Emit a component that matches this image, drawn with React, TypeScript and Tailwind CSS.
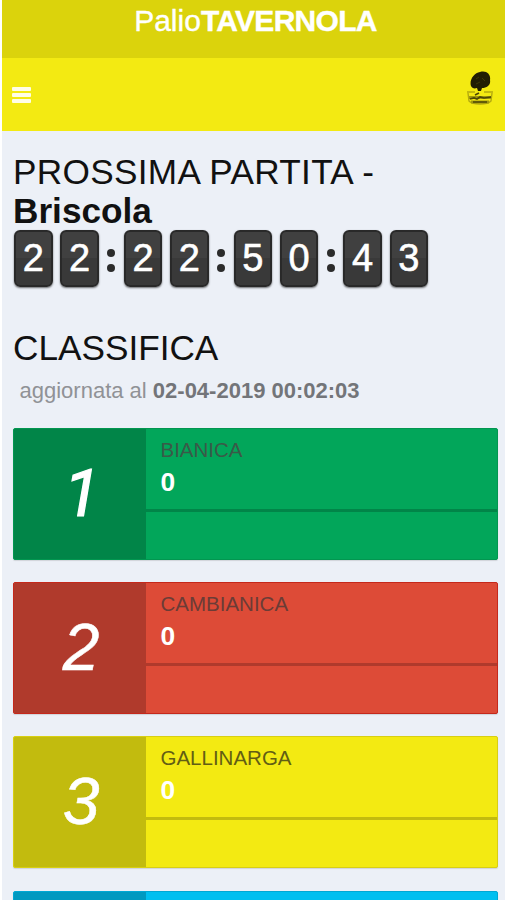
const teams = [
  { pos: 1, name: "BIANICA", points: 0, main: "bg-[#02a65a]", side: "bg-[#018548]", edge: "border-[#029650]", label: "text-[#3a5a48]" },
  { pos: 2, name: "CAMBIANICA", points: 0, main: "bg-[#dd4b37]", side: "bg-[#b03a2c]", edge: "border-[#c5281b]", label: "text-[#6b3c36]" },
  { pos: 3, name: "GALLINARGA", points: 0, main: "bg-[#f3ea12]", side: "bg-[#c2bb0e]", edge: "border-[#d8cf12]", label: "text-[#625e14]" },
  { pos: 4, name: "", points: null, main: "bg-[#00bff0]", side: "bg-[#0099c0]", edge: "border-[#00a8d4]", label: "text-[#234d5a]" },
];

function Digit({ value }: { value: string }) {
  return (
    <div className="flex h-[57px] w-[38.5px] items-center justify-center rounded-[6px] border-2 border-[#292929] bg-linear-to-b from-[#404040] from-50% to-[#393939] to-50% pb-[2px] text-[38px] leading-none text-white shadow-[0_1px_2px_rgba(0,0,0,0.55)] [-webkit-text-stroke:0.6px_white]">
      {value}
    </div>
  );
}

function Pair({ value }: { value: string }) {
  return (
    <div className="flex gap-[7.8px]">
      <Digit value={value[0]} />
      <Digit value={value[1]} />
    </div>
  );
}

function Colon() {
  return (
    <div className="flex w-[25px] flex-col items-center gap-[7px] pt-[19px]">
      <span className="size-[8px] rounded-full bg-[#2c2c2c]" />
      <span className="size-[8px] rounded-full bg-[#2c2c2c]" />
    </div>
  );
}

function Emblem() {
  return (
    <svg viewBox="0 0 30 36" className="h-[36px] w-[30px]">
      <path d="M6 15C4 9 9 2 15 1c7-2 11 3 10 8 1 5-3 8-8 8l-1 3h-3l-1-3c-3 1-5 0-6-2z" fill="#211e03" />
      <path d="M11 8l3-2m3 1 3 3m-9 3 4-2" stroke="#3d3906" strokeWidth="1" />
      <path d="M2 21h8m9 0h9M3 22l1 8c4 4 18 4 22 0l1-8" fill="none" stroke="#b5ab0e" strokeWidth="1.4" />
      <path d="M4 26.500h22M6 31h18" fill="none" stroke="#a1980d" strokeWidth="3" />
      <path d="M5 28l4-1 3 1 3-2 4 1 7-1M8 31h14M10 24l4-2" fill="none" stroke="#4c4707" strokeWidth="1.700" />
    </svg>
  );
}

function TeamBox({ team }: { team: (typeof teams)[number] }) {
  return (
    <div className={`flex h-[132px] shrink-0 overflow-hidden rounded-[2px] border shadow-[0_1px_1px_rgba(0,0,0,0.12)] ${team.main} ${team.edge}`}>
      <div className={`flex w-[132px] items-center justify-center pb-[3px] pl-[2px] text-[66px] leading-none text-white italic ${team.side}`}>
        {team.points !== null && (
          <span className={team.pos === 1 ? "pt-[2px] pl-[2px] font-[Roboto,sans-serif] [-webkit-text-stroke:1.2px_white]" : "[-webkit-text-stroke:0.5px_white]"}>
            {team.pos}
          </span>
        )}
      </div>
      <div className="flex flex-1 flex-col">
        <div className="flex h-[80px] flex-col pt-[6px] pl-[14.5px]">
          <span className={`text-[20.5px] leading-[30px] ${team.label}`}>{team.name}</span>
          <span className="text-[26.4px] leading-[34px] font-bold text-white">{team.points}</span>
        </div>
        <div className={`h-[3px] ${team.side}`} />
      </div>
    </div>
  );
}

export default function App() {
  return (
    <div className="flex h-[900px] w-[506px] flex-col overflow-hidden border-r border-l-2 border-white bg-[#ecf0f7] font-['Liberation_Sans',Arial,sans-serif]">
      <header className="shrink-0">
        <div className="flex h-[58px] justify-center bg-[#dbd30c] pt-[3px] pl-[4px] text-[30px] leading-[36px] whitespace-nowrap text-white">
          <span className="[-webkit-text-stroke:0.4px_white]">Palio</span>
          <b className="tracking-[-0.7px] [-webkit-text-stroke:0.4px_white]">TAVERNOLA</b>
        </div>
        <div className="flex h-[73px] items-center justify-between bg-[#f3ea12] pr-[10px] pl-[10px]">
          <div className="flex flex-col gap-[2px]">
            <span className="h-[4px] w-[19px] rounded-[1px] bg-[#fffde6]" />
            <span className="h-[4px] w-[19px] rounded-[1px] bg-[#fffde6]" />
            <span className="h-[4px] w-[19px] rounded-[1px] bg-[#fffde6]" />
          </div>
          <div className="pb-[11px]">
            <Emblem />
          </div>
        </div>
      </header>
      <main className="flex flex-col pr-[7px] pl-[11px]">
        <h1 className="pt-[21px] text-[35.2px] leading-[39px] whitespace-nowrap text-[#111]">
          <span className="tracking-[0.3px]">PROSSIMA PARTITA -</span>
          <br />
          <b>Briscola</b>
        </h1>
        <div className="flex pl-[1px]">
          <Pair value="22" />
          <Colon />
          <Pair value="22" />
          <Colon />
          <Pair value="50" />
          <Colon />
          <Pair value="43" />
        </div>
        <h1 className="pt-[41px] text-[35.2px] leading-[39px] text-[#111]">CLASSIFICA</h1>
        <p className="pt-[8px] pl-[6.500px] text-[22px] leading-[32px] whitespace-nowrap text-[#909296]">
          aggiornata al <b className="text-[#737579]">02-04-2019 00:02:03</b>
        </p>
        <div className="flex flex-col gap-[22.2px] pt-[21px]">
          {teams.map((team) => (
            <TeamBox key={team.pos} team={team} />
          ))}
        </div>
      </main>
    </div>
  );
}
